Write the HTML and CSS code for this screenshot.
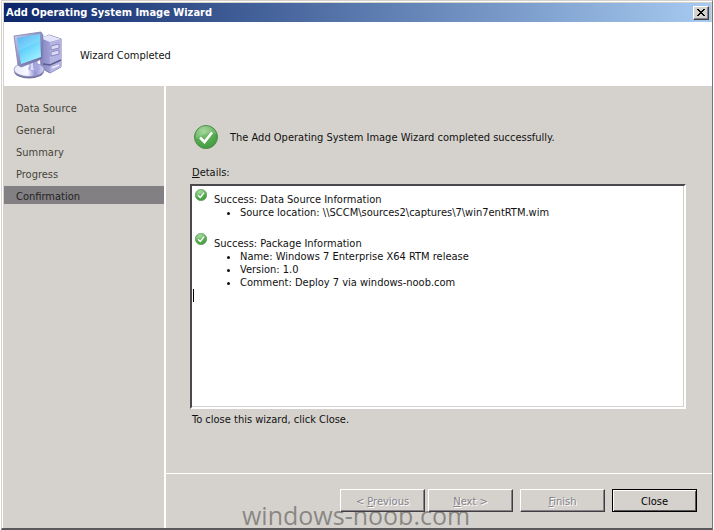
FILE: index.html
```html
<!DOCTYPE html>
<html lang="en">
<head>
    <meta charset="UTF-8">
    <meta name="viewport" content="width=device-width, initial-scale=1.0">
    <title>Add Operating System Image Wizard</title>
    <link rel="stylesheet" href="styles.css">
</head>
<body>
    <!-- shared icons -->
    <svg class="defs" width="0" height="0" aria-hidden="true">
        <defs>
            <radialGradient id="green" cx="40%" cy="25%" r="80%">
                <stop offset="0" stop-color="#8fcf86"/>
                <stop offset="0.5" stop-color="#5cad54"/>
                <stop offset="1" stop-color="#3f9a3c"/>
            </radialGradient>
            <symbol id="tick" viewBox="0 0 24 24">
                <circle cx="12" cy="12" r="11.5" fill="url(#green)" stroke="#4a8f4a"/>
                <path d="M2 10a10 8.500 0 0 1 20-1c-5-2-12-1-20 5z" fill="#fff" opacity="0.18"/>
                <path d="M6 12.500l4.500 4.500L18 7.500" fill="none" stroke="#fff" stroke-width="2.600"/>
            </symbol>
        </defs>
    </svg>

    <div class="window">
        <div class="titlebar">
            <h1>Add Operating System Image Wizard</h1>
            <button class="close-x" type="button" aria-label="Close window">
                <svg width="8" height="7" viewBox="0 0 8 7" shape-rendering="crispEdges"><path d="M0 0h2v1h1v1h2V1h1V0h2v1H7v1H6v1H5v1h1v1h1v1h1v1H6V6H5V5H3v1H2v1H0V6h1V5h1V4h1V3H2V2H1V1H0z"/></svg>
            </button>
        </div>

        <div class="header">
            <svg class="computer" width="50" height="48" viewBox="0 0 50 48" aria-hidden="true">
                <defs>
                    <linearGradient id="screen" x1="0" y1="0" x2="0.6" y2="1">
                        <stop offset="0" stop-color="#3fa4ee"/>
                        <stop offset="0.5" stop-color="#62d0fb"/>
                        <stop offset="1" stop-color="#a0f0ff"/>
                    </linearGradient>
                    <linearGradient id="frame" x1="0" y1="0" x2="1" y2="1">
                        <stop offset="0" stop-color="#c9cef0"/>
                        <stop offset="0.5" stop-color="#8f92c4"/>
                        <stop offset="1" stop-color="#5c5c96"/>
                    </linearGradient>
                    <linearGradient id="tower" x1="0" y1="0" x2="1" y2="0">
                        <stop offset="0" stop-color="#8181bf"/>
                        <stop offset="1" stop-color="#c3c3ee"/>
                    </linearGradient>
                    <linearGradient id="base" x1="0" y1="0" x2="1" y2="0">
                        <stop offset="0" stop-color="#e9e9fb"/>
                        <stop offset="0.45" stop-color="#f8f8ff"/>
                        <stop offset="0.7" stop-color="#9393d6"/>
                        <stop offset="1" stop-color="#d5d5f2"/>
                    </linearGradient>
                </defs>
                <path d="M27 8l9-4 12 4v28l-11 6-9-5z" fill="url(#tower)" stroke="#7c7cae"/>
                <path d="M27 7l9-3 12 4-11 3z" fill="#e4e4fa"/>
                <path d="M37 11l11-3v28l-11 6z" fill="#b4b4e4"/>
                <path d="M38 15l8-2v4l-8 2zM38 21l8-2v4l-8 2z" fill="#dcdcf8" stroke="#7878ae" stroke-width="0.800"/>
                <path d="M30 33l7 1 11-5" fill="none" stroke="#5c5c92" stroke-width="1.500"/>
                <path d="M39 37l7-3" stroke="#eeeeff" stroke-width="1.500"/>
                <ellipse cx="16" cy="40" rx="15" ry="7.500" fill="#73739d"/>
                <ellipse cx="16" cy="38.500" rx="15" ry="7" fill="url(#base)" stroke="#9292bd" stroke-width="0.800"/>
                <path d="M16 31l9-3c-1 5 0 8 2 10-3 3-9 3-12 0 2-2 2-5 1-7z" fill="#a4a4df"/>
                <path d="M17 32l3-1c0 4 0 6 1 8h-4c1-2 1-5 0-7z" fill="#dadaf8"/>
                <path d="M1 5L28 1l2 3-1 24-21 8-3-2z" fill="url(#frame)" stroke="#7e80ae" stroke-width="0.800"/>
                <path d="M4 7l23-4 1 23-20 7z" fill="url(#screen)"/>
                <path d="M4 7l23-4v7L5 20z" fill="#fff" opacity="0.150"/>
            </svg>
            <h2>Wizard Completed</h2>
        </div>

        <div class="body">
            <ol class="steps">
                <li>Data Source</li>
                <li>General</li>
                <li>Summary</li>
                <li>Progress</li>
                <li class="active" aria-current="step">Confirmation</li>
            </ol>

            <div class="main">
                <div class="content">
                    <div class="result">
                        <svg class="tick-big" aria-hidden="true"><use href="#tick"/></svg>
                        <p>The Add Operating System Image Wizard completed successfully.</p>
                    </div>
                    <p class="label" id="details-label"><u>D</u>etails:</p>
                    <div class="details" role="textbox" aria-multiline="true" aria-readonly="true" aria-labelledby="details-label" tabindex="0">
                        <div class="entry">
                            <svg class="tick-small" aria-hidden="true"><use href="#tick"/></svg>
                            <div class="entry-text">
                                <p>Success: Data Source Information</p>
                                <ul>
                                    <li>Source location: \\SCCM\sources2\captures\7\win7entRTM.wim</li>
                                </ul>
                            </div>
                        </div>
                        <div class="entry">
                            <svg class="tick-small" aria-hidden="true"><use href="#tick"/></svg>
                            <div class="entry-text">
                                <p>Success: Package Information</p>
                                <ul>
                                    <li>Name: Windows 7 Enterprise X64 RTM release</li>
                                    <li>Version: 1.0</li>
                                    <li>Comment: Deploy 7 via windows-noob.com</li>
                                </ul>
                            </div>
                        </div>
                        <div class="caret"></div>
                    </div>
                    <p class="hint">To close this wizard, click Close.</p>
                </div>

                <div class="footer">
                    <div class="nav">
                        <button type="button" disabled>&lt; <u>P</u>revious</button>
                        <button type="button" disabled><u>N</u>ext &gt;</button>
                    </div>
                    <button type="button" disabled><u>F</u>inish</button>
                    <button type="button" class="default">Close</button>
                </div>
            </div>
        </div>
    </div>
    <div class="watermark">windows-noob.com</div>
</body>
</html>
```
FILE: styles.css
```css
* {
    margin: 0;
    padding: 0;
    box-sizing: border-box;
}

body {
    position: relative;
    display: flex;
    min-height: 100vh;
    padding: 0 1px;
    background-color: #fff;
    font-family: "DejaVu Sans Condensed", "DejaVu Sans", sans-serif;
    font-stretch: condensed;
    font-size: 11px;
    line-height: 13px;
    color: #111;
}

.defs {
    position: absolute;
}

/* window frame */
.window {
    flex: 1;
    display: flex;
    flex-direction: column;
    padding: 1px 0 0 1px;
    background-color: #d5d2cd;
    border: 1px solid #d5d2cd;
    border-right-color: #77757a;
    border-bottom: 2px solid #5a585a;
    box-shadow: inset 1px 1px #fff;
}

.titlebar {
    display: flex;
    align-items: center;
    justify-content: space-between;
    height: 19px;
    margin: 1px 1px 0;
    padding: 0 2px;
    background: linear-gradient(to right, #0c2669, #a6caf0);
}

.titlebar h1 {
    font-size: 11px;
    font-weight: bold;
    color: #fff;
}

button {
    font: inherit;
    color: #000;
    background-color: #d5d2cd;
    border: 1px solid;
    border-color: #fff #403d40 #403d40 #fff;
    box-shadow: inset -1px -1px #85828a;
}

.close-x {
    display: flex;
    align-items: center;
    justify-content: center;
    width: 16px;
    height: 14px;
}

.header {
    display: flex;
    align-items: center;
    gap: 17px;
    height: 64px;
    margin-left: 1px;
    padding: 2px 9px 0;
    background-color: #fff;
}

.header h2 {
    font-size: 11px;
    font-weight: normal;
}

.body {
    flex: 1;
    display: flex;
    margin-left: 1px;
}

/* left side steps */
.steps {
    display: flex;
    flex-direction: column;
    gap: 4px;
    width: 162px;
    padding-top: 12px;
    border-right: 2px solid #fff;
    list-style: none;
    color: #45433a;
}

.steps li {
    padding: 4px 12px 1px;
}

.steps .active {
    background-color: #828082;
    color: #222;
}

.main {
    flex: 1;
    display: flex;
    flex-direction: column;
}

.content {
    flex: 1;
    display: flex;
    flex-direction: column;
    padding: 39px 26px 47px 24px;
}

.result {
    display: flex;
    align-items: center;
    gap: 12px;
    padding-left: 4px;
}

.tick-big {
    width: 24px;
    height: 24px;
}

.label {
    margin: 17px 2px 5px;
}

.details {
    flex: 1;
    padding: 2px 1px;
    background-color: #fff;
    border: 2px solid;
    border-color: #4a484c #fff #fff #4a484c;
    box-shadow: inset -1px -1px #d5d2cd;
    outline: none;
}

.entry {
    display: flex;
    gap: 7px;
    padding-left: 1px;
    margin-bottom: 13px;
}

.entry + .entry {
    margin-bottom: 0;
}

.tick-small {
    width: 12px;
    height: 12px;
    margin: 1px 0 0 1px;
}

.entry-text {
    padding-top: 5px;
}

.entry-text ul {
    padding-left: 26px;
}

.caret {
    width: 1px;
    height: 13px;
    background-color: #000;
}

.hint {
    margin: 4px 2px 0;
}

/* bottom buttons */
.footer {
    display: flex;
    justify-content: flex-end;
    gap: 7px;
    padding: 15px 15px 16px;
    border-top: 1px solid #fff;
}

.nav {
    display: flex;
    gap: 3px;
}

.footer button {
    position: relative;
    z-index: 1;
    width: 85px;
    height: 23px;
    padding-top: 1px;
}

.footer button:disabled {
    color: #85828a;
    text-shadow: 1px 1px #fff;
}

.footer .default {
    border-color: #000;
    box-shadow: inset 1px 1px #fff, inset -1px -1px #5a585a;
}

.watermark {
    position: absolute;
    left: 242px;
    bottom: 0;
    font-family: "Open Sans", sans-serif;
    font-stretch: normal;
    font-size: 25px;
    line-height: 30px;
    color: rgba(60, 58, 56, 0.5);
    pointer-events: none;
}
```
